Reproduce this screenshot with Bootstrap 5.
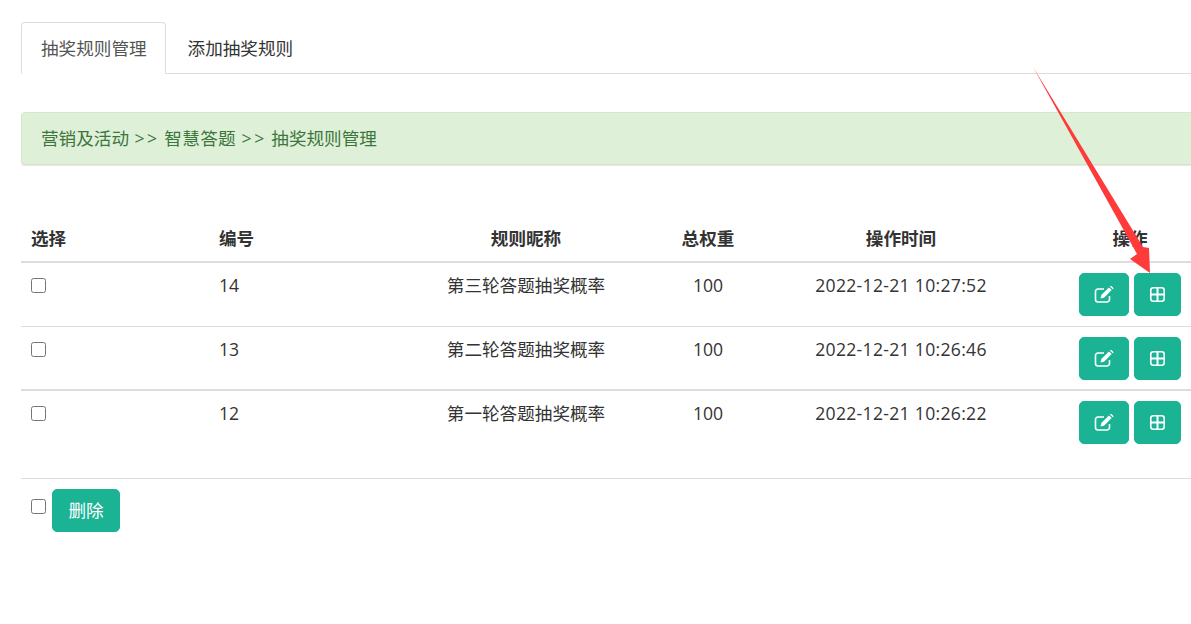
<!DOCTYPE html>
<html lang="zh-CN">
<head>
<meta charset="utf-8">
<title>抽奖规则管理</title>
<link rel="stylesheet" href="https://cdn.jsdelivr.net/npm/bootstrap@5.3.0/dist/css/bootstrap.min.css">
<style>
html, body { height: 100%; overflow: hidden; }
body { font-family: "Open Sans", "Noto Sans CJK SC", sans-serif; font-size: 17.6px; color: #333; background: #fff; position: relative; }
.page-shell { width: 1255px; padding: 22px 21px 0; }
.rule-tabs { border-bottom: 1px solid #ddd; margin-bottom: 38px; }
.rule-tabs .nav-link { height: 52px; padding: 0 19px; line-height: 50px; color: #333; font-size: 17.6px; border-radius: 4px 4px 0 0; }
.rule-tabs .nav-link.active { padding-right: 18px; color: #555; border-color: #ddd #ddd #fff; }
.rule-tabs .nav-item + .nav-item { margin-left: 2px; }
.crumb-bar { height: 53px; padding: 0 19px; line-height: 51px; margin-bottom: 51px; background: #dff0d8; color: #3c763d; border: 1px solid #d6e9c6; border-radius: 4px; box-shadow: 0 1px 1px rgba(0,0,0,.1); font-size: 17.6px; }
.gt-gap { letter-spacing: 2.5px; margin-left: 1px; }
.topic-name { letter-spacing: .35px; }
.rule-table { table-layout: fixed; width: 1213px; margin-bottom: 0; --bs-table-color: #333; --bs-table-border-color: #ddd; }
.rule-table th { font-weight: 700; padding: 10px; height: 46px; line-height: 25px; border-bottom: 2px solid #ddd; vertical-align: middle; }
.rule-table td { padding: 10px; height: 64px; line-height: 25px; border-bottom: 1px solid #ddd; vertical-align: top; }
.rule-table tbody tr:nth-child(2) td { height: 63px; padding-bottom: 8px; border-bottom-width: 2px; }
.rule-table tbody tr:last-child td { border-bottom: 0; height: 88px; }
.rule-check { width: 15px; height: 15px; margin: 0; display: block; margin-top: 5px; }
.stamp { letter-spacing: .3px; }
.mint-btn { background: #1ab394; border: 1px solid #1ab394; color: #fff; border-radius: 5px; padding: 0; height: 43px; display: inline-flex; align-items: center; justify-content: center; }
.mint-btn:hover { background: #18a689; border-color: #18a689; color: #fff; }
.edit-btn { width: 50px; }
.add-btn { width: 47px; }
.del-btn { width: 68px; font-size: 17.6px; margin-left: 6px; }
.btn-pair { gap: 5px; }
.foot-bar { border-top: 1px solid #ddd; padding: 10px 10px 0; width: 1213px; }
.foot-check { margin-top: 10px; }
.pointer-arrow { position: absolute; left: 0; top: 0; pointer-events: none; }
</style>
</head>
<body>
<div class="page-shell">
  <ul class="nav nav-tabs rule-tabs">
    <li class="nav-item"><a class="nav-link active" href="#">抽奖规则管理</a></li>
    <li class="nav-item"><a class="nav-link" href="#">添加抽奖规则</a></li>
  </ul>
  <div class="crumb-bar">营销及活动 <span class="gt-gap">&gt;&gt;</span> <span class="topic-name">智慧答题</span> <span class="gt-gap">&gt;&gt;</span> 抽奖规则管理</div>
  <table class="table rule-table">
    <colgroup><col style="width:188px"><col style="width:203px"><col style="width:228px"><col style="width:136px"><col style="width:250px"><col style="width:208px"></colgroup>
    <thead>
      <tr><th>选择</th><th>编号</th><th class="text-center">规则昵称</th><th class="text-center">总权重</th><th class="text-center">操作时间</th><th class="text-center">操作</th></tr>
    </thead>
    <tbody>
      <tr>
        <td><input class="rule-check" type="checkbox"></td><td>14</td><td class="text-center">第三轮答题抽奖概率</td><td class="text-center">100</td><td class="text-center stamp">2022-12-21 10:27:52</td>
        <td><div class="d-flex justify-content-center btn-pair">
          <button class="btn mint-btn edit-btn" type="button"><svg width="20" height="17" viewBox="0 0 20 17" fill="none"><path d="M10 3H4a2.5 2.5 0 0 0-2.5 2.5v8A2.5 2.5 0 0 0 4 16h9a2.5 2.5 0 0 0 2.5-2.5V10" stroke="#fff" stroke-width="1.6"/><path d="M6.5 12.5l.8-3.4L15 1.4l2.7 2.7-7.7 7.6z" fill="#fff"/><path d="M16 .6l2.7 2.7 1-1.1L17 -.4z" fill="#fff"/></svg></button>
          <button class="btn mint-btn add-btn" type="button"><svg width="15" height="15" viewBox="0 0 15 15" fill="none"><rect x=".8" y=".8" width="13.4" height="13.4" rx="2.5" stroke="#fff" stroke-width="1.6"/><path d="M7.5 1v13M1 7.5h13" stroke="#fff" stroke-width="2"/></svg></button>
        </div></td>
      </tr>
      <tr>
        <td><input class="rule-check" type="checkbox"></td><td>13</td><td class="text-center">第二轮答题抽奖概率</td><td class="text-center">100</td><td class="text-center stamp">2022-12-21 10:26:46</td>
        <td><div class="d-flex justify-content-center btn-pair">
          <button class="btn mint-btn edit-btn" type="button"><svg width="20" height="17" viewBox="0 0 20 17" fill="none"><path d="M10 3H4a2.5 2.5 0 0 0-2.5 2.5v8A2.5 2.5 0 0 0 4 16h9a2.5 2.5 0 0 0 2.5-2.5V10" stroke="#fff" stroke-width="1.6"/><path d="M6.5 12.5l.8-3.4L15 1.4l2.7 2.7-7.7 7.6z" fill="#fff"/><path d="M16 .6l2.7 2.7 1-1.1L17 -.4z" fill="#fff"/></svg></button>
          <button class="btn mint-btn add-btn" type="button"><svg width="15" height="15" viewBox="0 0 15 15" fill="none"><rect x=".8" y=".8" width="13.4" height="13.4" rx="2.5" stroke="#fff" stroke-width="1.6"/><path d="M7.5 1v13M1 7.5h13" stroke="#fff" stroke-width="2"/></svg></button>
        </div></td>
      </tr>
      <tr>
        <td><input class="rule-check" type="checkbox"></td><td>12</td><td class="text-center">第一轮答题抽奖概率</td><td class="text-center">100</td><td class="text-center stamp">2022-12-21 10:26:22</td>
        <td><div class="d-flex justify-content-center btn-pair">
          <button class="btn mint-btn edit-btn" type="button"><svg width="20" height="17" viewBox="0 0 20 17" fill="none"><path d="M10 3H4a2.5 2.5 0 0 0-2.5 2.5v8A2.5 2.5 0 0 0 4 16h9a2.5 2.5 0 0 0 2.5-2.5V10" stroke="#fff" stroke-width="1.6"/><path d="M6.5 12.5l.8-3.4L15 1.4l2.7 2.7-7.7 7.6z" fill="#fff"/><path d="M16 .6l2.7 2.7 1-1.1L17 -.4z" fill="#fff"/></svg></button>
          <button class="btn mint-btn add-btn" type="button"><svg width="15" height="15" viewBox="0 0 15 15" fill="none"><rect x=".8" y=".8" width="13.4" height="13.4" rx="2.5" stroke="#fff" stroke-width="1.6"/><path d="M7.5 1v13M1 7.5h13" stroke="#fff" stroke-width="2"/></svg></button>
        </div></td>
      </tr>
    </tbody>
  </table>
  <div class="foot-bar d-flex align-items-start">
    <input class="rule-check foot-check" type="checkbox">
    <button class="btn mint-btn del-btn" type="button">删除</button>
  </div>
</div>
<svg class="pointer-arrow" width="1191" height="624" viewBox="0 0 1191 624"><polygon points="1033,67 1143,247 1149,248 1150,273 1130,259 1137,254" fill="#fe3a3a"/></svg>
</body>
</html>
